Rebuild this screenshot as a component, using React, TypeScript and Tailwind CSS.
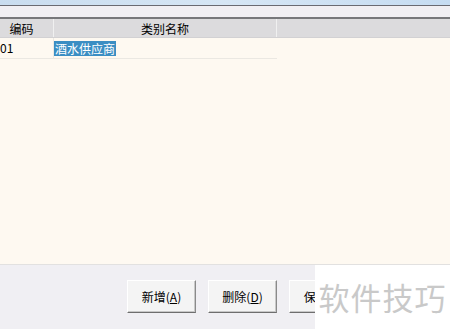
const font = { fontFamily: '"Noto Sans CJK SC", "Liberation Sans", sans-serif' };

function Btn({ label, hot }: { label: string; hot: string }) {
  return (
    <button className="w-[69px] h-[33px] shrink-0 bg-[#f4f4f4] border border-t-white border-l-white border-b-[#6e6e6e] border-r-[#8a8a8a] shadow-[inset_-1px_-1px_0_#c8c8c8] text-[12px] text-black flex items-center justify-center">
      {label}(<span className="underline">{hot}</span>)
    </button>
  );
}

export default function App() {
  return (
    <div className="w-[450px] h-[329px] overflow-hidden bg-[#f0eff3] flex flex-col" style={font}>
      <div className="h-[5px] bg-gradient-to-r from-[#c9dcef] via-[#d6e6f5] to-[#c6dcf2]" />
      <div className="h-[1px] bg-[#6a6a72]" />
      <div className="h-[11px] bg-[#f1eff3]" />
      <div className="h-[2px] bg-[#77777b]" />
      <div className="h-[19px] bg-[#dcdbdd] flex text-[12px] text-black border-b border-[#d2d1d3]">
        <div className="w-[54px] flex items-center justify-center pr-[10px] pt-[1px] border-r border-[#f0f0f0]">编码</div>
        <div className="w-[223px] flex items-center justify-center pt-[1px] border-r border-[#f0f0f0]">类别名称</div>
        <div className="flex-1" />
      </div>
      <div className="h-[227px] bg-[#fef9f1] border-b border-[#e2e1e0]">
        <div className="flex h-[21px] w-[277px] border-b border-[#ebe8e2] text-[12px]">
          <div className="w-[54px] flex items-center border-r border-[#ebe8e2]">01</div>
          <div className="flex items-center">
            <span className="bg-[#3b8ec3] text-white leading-[15px] px-[1px]">酒水供应商</span>
          </div>
        </div>
      </div>
      <div className="flex-1 flex">
        <div className="w-[315px] overflow-hidden flex gap-[12px] pl-[127px] pt-[15px]">
          <Btn label="新增" hot="A" />
          <Btn label="删除" hot="D" />
          <Btn label="保存" hot="S" />
        </div>
        <div className="flex-1 bg-white flex items-center justify-center text-[31px] text-[#c9c9c9] tracking-[1px]">
          软件技巧
        </div>
      </div>
    </div>
  );
}
